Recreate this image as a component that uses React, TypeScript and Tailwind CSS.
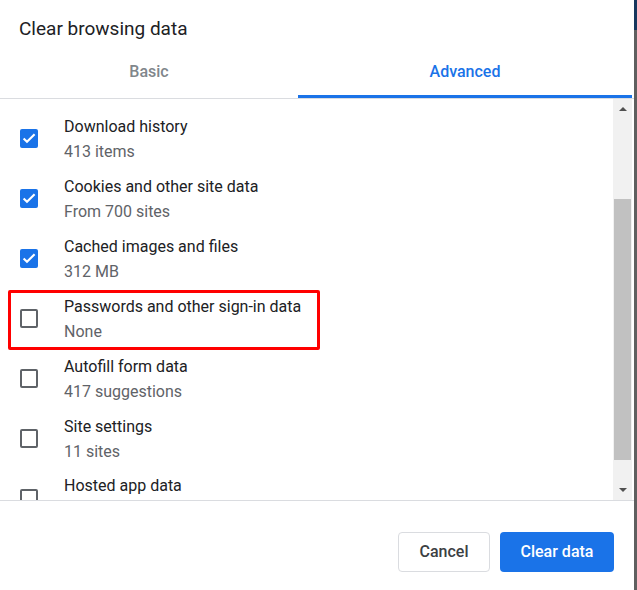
import React from 'react';

type Item = {
  title: string;
  detail?: string;
  checked: boolean;
  highlight?: boolean;
};

const items: Item[] = [
  { title: 'Download history', detail: '413 items', checked: true },
  { title: 'Cookies and other site data', detail: 'From 700 sites', checked: true },
  { title: 'Cached images and files', detail: '312 MB', checked: true },
  { title: 'Passwords and other sign-in data', detail: 'None', checked: false, highlight: true },
  { title: 'Autofill form data', detail: '417 suggestions', checked: false },
  { title: 'Site settings', detail: '11 sites', checked: false },
  { title: 'Hosted app data', checked: false },
];

const Checkbox: React.FC<{ checked: boolean }> = ({ checked }) =>
  checked ? (
    <div className="w-[18px] h-[19px] rounded-[2px] bg-[#1a73e8] flex items-center justify-center">
      <svg width="18" height="18" viewBox="0 0 18 18" fill="none">
        <path d="M3.6 9.4l3.4 3.4L14.6 5.2" stroke="white" strokeWidth="2.1" />
      </svg>
    </div>
  ) : (
    <div className="w-[18px] h-[19px] rounded-[2px] border-2 border-[#5f6368]" />
  );

const Row: React.FC<{ item: Item }> = ({ item }) => (
  <div className="relative h-[60px] flex items-center shrink-0">
    {item.highlight && (
      <div className="absolute left-[8px] top-[2px] w-[312px] h-[60px] border-[3px] border-[#ff0000] rounded-[2px]" />
    )}
    <div className="w-[64px] pl-[20px] shrink-0">
      <Checkbox checked={item.checked} />
    </div>
    <div className={`flex flex-col ${item.detail ? 'mt-[1px]' : 'self-start mt-[5px]'}`}>
      <span className="text-[16px] leading-[25px] text-[#202124]">{item.title}</span>
      {item.detail && (
        <span className="text-[16px] leading-[25px] text-[#5f6368]">{item.detail}</span>
      )}
    </div>
  </div>
);

export default function App() {
  return (
    <div
      className="w-[637px] h-[590px] bg-white flex"
      style={{ fontFamily: 'Roboto, "Liberation Sans", sans-serif' }}
    >
      <div className="w-[634px] h-full flex flex-col">
        <div className="h-[56px] pl-[19px] pt-[2px] flex items-center text-[19px] text-[#202124]">
          Clear browsing data
        </div>
        <div className="h-[43px] flex border-b border-[#dadce0]">
          <div className="w-[298px] flex items-start justify-center pt-[4px] text-[16px] leading-[24px] font-medium text-[#80868b]">
            Basic
          </div>
          <div className="flex-1 flex items-start justify-center pt-[4px] text-[16px] leading-[24px] font-medium text-[#1a73e8] border-b-[3px] border-[#1a73e8] mr-[2px]">
            Advanced
          </div>
        </div>
        <div className="h-[402px] flex border-b border-[#dadce0] overflow-hidden">
          <div className="flex-1 flex flex-col pt-[9px] overflow-hidden">
            {items.map((it) => (
              <Row key={it.title} item={it} />
            ))}
          </div>
          <div className="w-[19px] bg-[#f1f1f1] flex flex-col items-center mr-[2px]">
            <div className="h-[20px] flex items-center justify-center">
              <div className="w-0 h-0 border-l-[4px] border-r-[4px] border-b-[4px] border-l-transparent border-r-transparent border-b-[#505050]" />
            </div>
            <div className="h-[80px]" />
            <div className="w-[17px] h-[261px] bg-[#c1c1c1]" />
            <div className="flex-1" />
            <div className="h-[20px] flex items-center justify-center">
              <div className="w-0 h-0 border-l-[4px] border-r-[4px] border-t-[4px] border-l-transparent border-r-transparent border-t-[#505050]" />
            </div>
          </div>
        </div>
        <div className="flex-1 flex justify-end items-start pt-[31px] pr-[20px] gap-[10px]">
          <button className="w-[92px] h-[40px] rounded-[4px] border border-[#dadce0] bg-white text-[16px] font-medium text-[#3c4043]">
            Cancel
          </button>
          <button className="w-[114px] h-[40px] rounded-[4px] bg-[#1a73e8] text-[16px] font-medium text-white">
            Clear data
          </button>
        </div>
      </div>
      <div className="w-[3px] h-full flex flex-col">
        <div className="h-[30px] bg-[#17375e]" />
        <div className="flex-1 bg-[#5f5f5f]" />
      </div>
    </div>
  );
}
